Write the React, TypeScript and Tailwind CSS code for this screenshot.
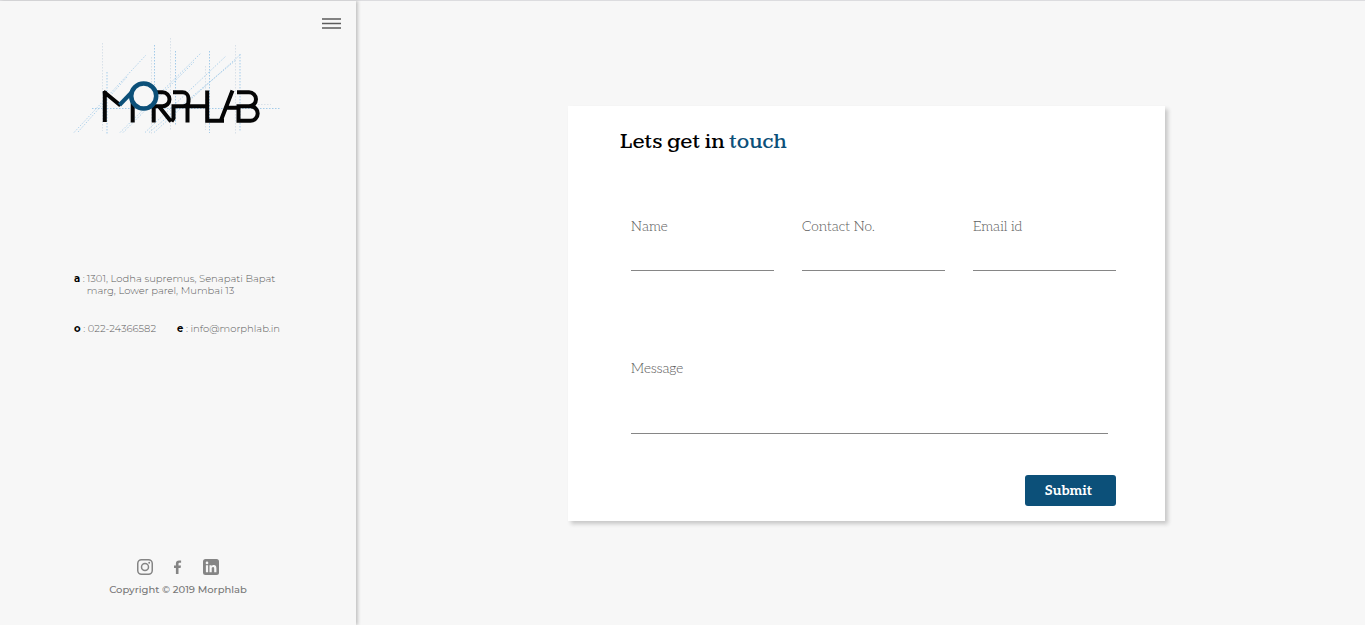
import React from "react";

function Logo() {
  return (
    <svg viewBox="70 38 215 100" className="block h-auto w-[215px]" role="img" aria-label="Morphlab" fill="none">
      <g stroke="#a3cbe9" strokeWidth="1" strokeDasharray="1.5 1.5">
        <path d="M107 72V134M154.500 45V85M175.500 51V126M209.500 51V133M240 54V131M92 108.500H281" />
        <path d="M74 132.500L146 55M78 132L127 77M120 132.500L201 53M123 132.500L194 62M145 132.500L226 56M149 132.500L236 60M154 132.500L241 54" strokeOpacity=".85" />
      </g>
      <g stroke="#cfdbe5" strokeWidth="1" strokeDasharray="1.500 1.500" strokeOpacity=".8">
        <path d="M102.500 43V131M151.500 57V134M170.500 38V131M205.500 66V130M235.500 45V135M255 104.500H271" />
      </g>
      <g stroke="#050505" strokeWidth="4">
        <path d="M104.800 91V122M103.500 91.500L120.500 105.500M132.700 100V122.500" />
        <path d="M155 92.300H162.500A7 7 0 0 1 162.500 106.300H153.700V122.500M159.500 107L171 121.500" />
        <path d="M173 92.300H182.500A6 6 0 0 1 188.500 98.300V101.500Q188.500 106.300 183 106.300H173.500V118.500L171.500 121.500M187.500 105V122.500M180 106.300H208" />
        <path d="M207.200 90.500V120.700H224M220.500 121.500L232.500 90.500M224.500 107.800H239" />
        <path d="M237 92.300H249A7 7 0 0 1 249 106.300H238.500V120.700H250.500A7.200 7.200 0 0 0 250.500 106.300" />
      </g>
      <g stroke="#0c5079">
        <path d="M119.500 105L132.500 91.500" strokeWidth="4" />
        <circle cx="143.700" cy="96" r="12.500" strokeWidth="4.500" fill="#f7f7f7" />
      </g>
    </svg>
  );
}

function InstagramIcon() {
  return (
    <svg viewBox="0 0 16 16" className="size-4" fill="none" stroke="currentColor" strokeWidth="1.500" aria-hidden="true">
      <rect x=".75" y=".75" width="14.500" height="14.500" rx="3.800" />
      <circle cx="8" cy="8" r="3.500" />
      <circle cx="12.200" cy="3.800" r=".95" fill="currentColor" stroke="none" />
    </svg>
  );
}

function FacebookIcon() {
  return (
    <svg viewBox="0 0 16 16" className="size-4" fill="currentColor" aria-hidden="true">
      <path d="M5.900 15V8.900H4V6.400H5.900V4.600C5.900 2.500 7.100 1.400 9 1.400C9.900 1.400 10.700 1.500 11.100 1.550V3.800H9.800C8.700 3.800 8.500 4.300 8.500 5.100V6.400H11L10.600 8.900H8.500V15Z" />
    </svg>
  );
}

function LinkedinIcon() {
  return (
    <svg viewBox="0 0 16 16" className="size-4" aria-hidden="true">
      <rect width="16" height="16" rx="2.500" fill="currentColor" />
      <g fill="#f7f7f7">
        <circle cx="4" cy="3.900" r="1.300" />
        <path d="M2.900 6.200H5.100V13.200H2.900ZM6.500 6.200H8.600V7.200C9 6.500 9.800 6 10.800 6C12.900 6 13.400 7.400 13.400 9.300V13.200H11.200V9.700C11.200 8.800 11.100 7.900 10.100 7.900C9 7.900 8.700 8.700 8.700 9.700V13.200H6.500Z" />
      </g>
    </svg>
  );
}

const fields = [
  { id: "name", label: "Name", type: "text" },
  { id: "contact", label: "Contact No.", type: "tel" },
  { id: "email", label: "Email id", type: "email" },
];

const labelClass = "block text-[14px] leading-[22px] font-light text-[#5f5f5f]";
const controlClass = "block w-full border-b border-[#868686] bg-transparent text-[14px] text-[#333] outline-none";

function Sidebar() {
  return (
    <aside className="flex w-[356px] shrink-0 flex-col font-['Montserrat','Inter',sans-serif] shadow-[2px_0_3px_#c4c4c4]">
      <button type="button" aria-label="Menu" className="mt-4 mr-[15px] flex h-[13px] items-center self-end">
        <svg viewBox="0 0 19 13" className="h-[13px] w-[19px]" stroke="#5c5c5c" strokeWidth="1.300" aria-hidden="true">
          <path d="M0 2H19M0 6.500H19M0 11H19" />
        </svg>
      </button>
      <a href="#" className="mt-2 ml-[70px] w-[215px]">
        <Logo />
      </a>
      <address className="mt-[135px] ml-[74px] text-[10px] leading-3 font-light text-[#5c5c5c] not-italic">
        <p className="flex gap-[2px]">
          <span className="whitespace-nowrap">
            <b className="font-bold text-black">a</b> :
          </span>
          <span>
            1301, Lodha supremus, Senapati Bapat
            <br />
            marg, Lower parel, Mumbai 13
          </span>
        </p>
        <p className="mt-[26px] flex gap-[21px]">
          <span>
            <b className="font-bold text-black">o</b> : 022-24366582
          </span>
          <span>
            <b className="font-bold text-black">e</b> : <a href="mailto:info@morphlab.in">info@morphlab.in</a>
          </span>
        </p>
      </address>
      <footer className="mt-auto flex flex-col items-center gap-[7px] pb-[27px] text-[#858585]">
        <nav aria-label="Social" className="flex gap-[17px]">
          <a href="#" aria-label="Instagram"><InstagramIcon /></a>
          <a href="#" aria-label="Facebook"><FacebookIcon /></a>
          <a href="#" aria-label="LinkedIn"><LinkedinIcon /></a>
        </nav>
        <p className="text-[10px] leading-4 font-medium text-[#777]">Copyright © 2019 Morphlab</p>
      </footer>
    </aside>
  );
}

export default function App() {
  return (
    <div className="flex min-h-screen border-t border-[#dcdcdf] bg-[#f7f7f7]">
      <Sidebar />
      <main className="flex flex-1 items-center justify-center pl-3 font-['Aleo','Liberation_Serif',serif]">
        <section className="w-full max-w-[597px] bg-white pt-[21px] pb-[15px] shadow-[3px_3px_4px_#c8c8c8]">
          <h1 className="pl-[52px] font-['Kameron','DejaVu_Serif',serif] text-[22px] leading-[30px] font-medium text-black">
            Lets get in <span className="text-[#0c5079]">touch</span>
          </h1>
          <form className="mt-[59px] flex flex-col pr-[49px] pl-[63px]" onSubmit={(e) => e.preventDefault()}>
            <div className="grid grid-cols-3 gap-7">
              {fields.map((f) => (
                <div key={f.id}>
                  <label htmlFor={f.id} className={labelClass}>{f.label}</label>
                  <input id={f.id} type={f.type} className={`${controlClass} h-[33px]`} />
                </div>
              ))}
            </div>
            <div className="mt-[87px] mr-2">
              <label htmlFor="message" className={labelClass}>Message</label>
              <textarea id="message" className={`${controlClass} h-[54px] resize-none`} />
            </div>
            <button
              type="submit"
              className="mt-[41px] h-[31px] w-[91px] self-end rounded-[3px] bg-[#0c5079] pr-1 text-[14px] font-bold text-white"
            >
              Submit
            </button>
          </form>
        </section>
      </main>
    </div>
  );
}
